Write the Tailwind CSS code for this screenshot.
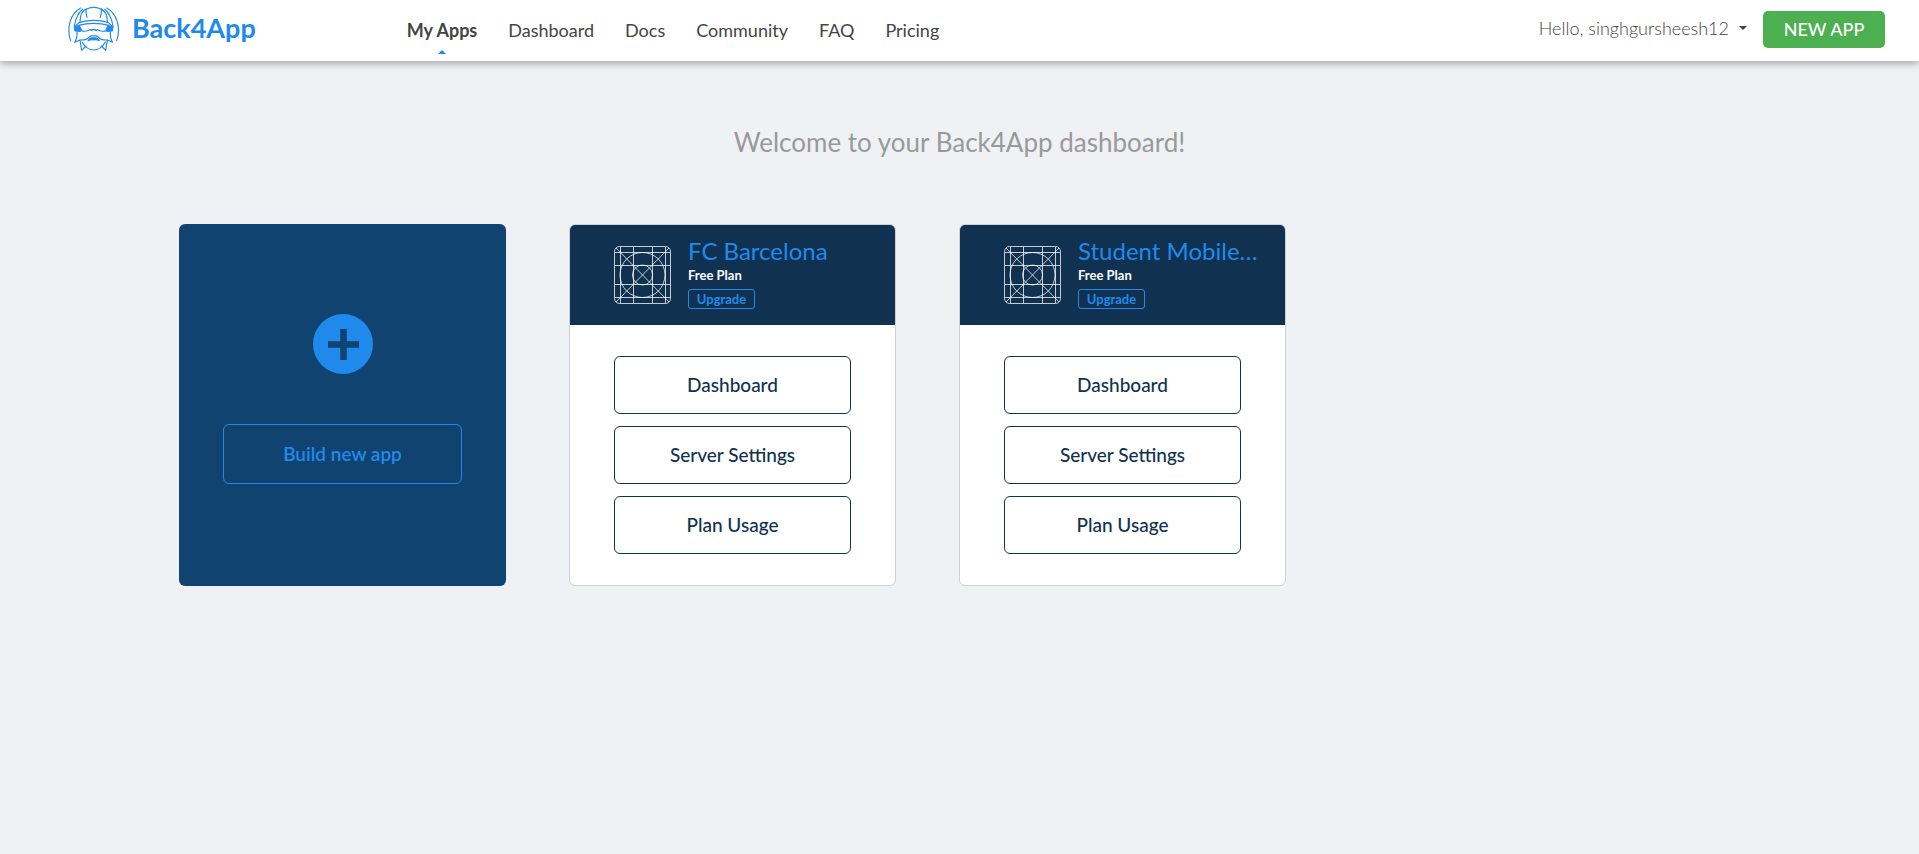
<!DOCTYPE html>
<html lang="en">
<head>
<meta charset="utf-8">
<meta name="viewport" content="width=device-width, initial-scale=1">
<title>Back4App</title>
<script src="https://cdn.jsdelivr.net/npm/@tailwindcss/browser@4"></script>
</head>
<body class="min-h-screen bg-[#f0f1f5] font-['Lato','Open_Sans',sans-serif] text-[#444]">
<svg class="hidden" aria-hidden="true">
  <symbol id="app-grid" viewBox="0 0 57 58">
    <g fill="none" stroke="#fff" stroke-opacity=".75">
      <rect x=".5" y=".5" width="56" height="57" rx="5"/>
      <path d="M6.500 1v56M19.500 1v56M38.500 1v56M51.500 1v56M1 6.500h55M1 19.500h55M1 38.500h55M1 51.500h55M2 2l53 54M55 2L2 56"/>
      <circle cx="28.500" cy="29" r="22.500"/>
      <circle cx="28.500" cy="29" r="10"/>
    </g>
  </symbol>
</svg>

<header class="relative flex h-[61px] items-center bg-white pr-[34px] pb-0.5 pl-[64px] shadow-[0_2px_8px_rgba(0,0,0,0.35)]">
  <a href="#" class="flex items-center gap-2 pb-1 text-[#208aec]">
    <svg class="h-[56px] w-[60px]" viewBox="0 0 180 168" fill="none" stroke="currentColor" stroke-width="3.500" stroke-linecap="round" stroke-linejoin="round" aria-hidden="true">
      <path d="M20 122C6 82 20 40 50 24M158 122C172 82 158 40 128 24"/>
      <path d="M31 78C35 56 43 38 56 28M147 78C143 56 135 38 122 28"/>
      <path d="M48 66C48 44 58 30 70 26Q89 18 108 26C120 30 130 44 130 66"/>
      <path d="M66 27Q65 40 69 52M112 27Q113 40 109 52"/>
      <path d="M45 68Q89 54 133 68M43 76Q89 64 135 76M45 68L32 80M133 68L146 80"/>
      <path fill="currentColor" d="M31 80l14-3 7 11-4 6-15-1zM147 80l-14-3-7 11 4 6 15-1z"/>
      <path d="M50 92Q68 97 79 88M128 92Q110 97 99 88"/>
      <path d="M81 91Q89 86 97 91" stroke-width="5"/>
      <path d="M39 96Q40 116 32 127L48 120L53 151L66 138M139 96Q138 116 146 127L130 120L125 151L112 138"/>
      <path d="M48 120Q68 121 74 112Q82 104 89 108Q96 104 104 112Q110 121 130 120"/>
      <path fill="currentColor" d="M72 122Q80 110 89 114Q98 110 106 122Q98 118 89 120Q80 118 72 122z"/>
      <path d="M54 126Q68 150 89 150Q110 150 124 126"/>
    </svg>
    <span class="text-[27px] leading-9 font-bold">Back4App</span>
  </a>

  <nav class="ml-[151px] flex items-center gap-[31px] text-[18px] leading-6" aria-label="Main">
    <a href="#" class="relative font-bold">My Apps
      <svg class="absolute top-[32px] left-1/2 h-1 w-2 -translate-x-1/2 text-[#208aec]" viewBox="0 0 8 4" fill="currentColor" aria-hidden="true"><path d="M0 4l4-4 4 4z"/></svg>
    </a>
    <a href="#">Dashboard</a>
    <a href="#">Docs</a>
    <a href="#">Community</a>
    <a href="#">FAQ</a>
    <a href="#">Pricing</a>
  </nav>

  <div class="ml-auto flex items-center gap-4">
    <button type="button" class="flex items-center gap-2.5 pb-1 text-[18px] leading-6 font-light">Hello, singhgursheesh12
      <svg class="h-1 w-2" viewBox="0 0 8 4" fill="currentColor" aria-hidden="true"><path d="M0 0h8L4 4z"/></svg>
    </button>
    <button type="button" class="h-[37px] w-[122px] rounded-[5px] bg-[#4caf50] pb-0.5 text-[18px] leading-6 font-medium text-white">NEW APP</button>
  </div>
</header>

<main>
  <h1 class="mt-[63px] text-center text-[26px] leading-9 font-normal text-[#999]">Welcome to your Back4App dashboard!</h1>

  <div class="mx-auto mt-16 grid max-w-[1561px] grid-cols-4 pr-px">
    <section class="mr-[63px] flex flex-col items-center rounded-md bg-[#10436f] px-11 pt-[90px] pb-[102px] text-[#208aec]">
      <svg class="size-[60px]" viewBox="0 0 60 60" aria-hidden="true"><circle cx="30" cy="30" r="30" fill="currentColor"/><path d="M15 30.500h31M30.500 15v31" stroke="#10436f" stroke-width="6.500"/></svg>
      <button type="button" class="mt-[50px] h-[60px] w-full rounded-md border border-[#208aec] text-[19px] leading-6 font-semibold">Build new app</button>
    </section>

    <section class="mr-[63px] overflow-hidden rounded-md border border-[#cdd1d7] bg-white">
      <header class="flex h-[100px] items-center gap-[17px] bg-[#103250] pr-8 pl-11">
        <svg class="h-[58px] w-[57px] shrink-0" aria-hidden="true"><use href="#app-grid"/></svg>
        <div class="min-w-0 pb-1">
          <h2 class="text-[24px] leading-7 whitespace-nowrap text-[#208aec]">FC Barcelona</h2>
          <p class="text-[13px] leading-5 font-bold text-white">Free Plan</p>
          <button type="button" class="mt-1 flex h-5 w-[67px] items-center justify-center rounded-[3px] border border-[#208aec] text-[13px] leading-4 font-bold text-[#208aec]">Upgrade</button>
        </div>
      </header>
      <div class="flex flex-col gap-3 px-11 py-[31px] text-[19px] leading-6 font-medium text-[#103250]">
        <button type="button" class="h-[58px] rounded-md border border-[#103250]">Dashboard</button>
        <button type="button" class="h-[58px] rounded-md border border-[#103250]">Server Settings</button>
        <button type="button" class="h-[58px] rounded-md border border-[#103250]">Plan Usage</button>
      </div>
    </section>

    <section class="mr-[63px] overflow-hidden rounded-md border border-[#cdd1d7] bg-white">
      <header class="flex h-[100px] items-center gap-[17px] bg-[#103250] pr-8 pl-11">
        <svg class="h-[58px] w-[57px] shrink-0" aria-hidden="true"><use href="#app-grid"/></svg>
        <div class="min-w-0 pb-1">
          <h2 class="text-[24px] leading-7 whitespace-nowrap text-[#208aec]">Student Mobile…</h2>
          <p class="text-[13px] leading-5 font-bold text-white">Free Plan</p>
          <button type="button" class="mt-1 flex h-5 w-[67px] items-center justify-center rounded-[3px] border border-[#208aec] text-[13px] leading-4 font-bold text-[#208aec]">Upgrade</button>
        </div>
      </header>
      <div class="flex flex-col gap-3 px-11 py-[31px] text-[19px] leading-6 font-medium text-[#103250]">
        <button type="button" class="h-[58px] rounded-md border border-[#103250]">Dashboard</button>
        <button type="button" class="h-[58px] rounded-md border border-[#103250]">Server Settings</button>
        <button type="button" class="h-[58px] rounded-md border border-[#103250]">Plan Usage</button>
      </div>
    </section>
  </div>
</main>
</body>
</html>
